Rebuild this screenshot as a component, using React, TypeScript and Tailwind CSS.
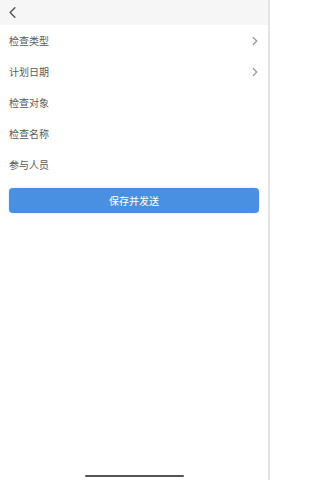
import { ChevronLeft, ChevronRight } from 'lucide-react';

const rows = [
  { label: '检查类型', arrow: true },
  { label: '计划日期', arrow: true },
  { label: '检查对象', arrow: false },
  { label: '检查名称', arrow: false },
  { label: '参与人员', arrow: false },
];

export default function App() {
  return (
    <div
      className="w-[270px] h-[480px] bg-white flex flex-col relative border-r-2 border-[#e4e4e4] overflow-hidden"
      style={{ fontFamily: '"Noto Sans CJK SC", "Noto Sans", sans-serif' }}
    >
      {/* Header */}
      <header className="h-[25px] bg-[#f6f6f6] flex items-center pl-[3px]">
        <ChevronLeft className="w-[19px] h-[19px] text-[#555]" strokeWidth={1.8} />
      </header>

      {/* Form rows */}
      <div className="flex flex-col">
        {rows.map((r) => (
          <div key={r.label} className="h-[31px] flex items-center justify-between pl-[9px] pr-[6px]">
            <span className="text-[10px] text-[#5a5a5a] leading-none">{r.label}</span>
            {r.arrow && <ChevronRight className="w-[14px] h-[14px] text-[#9a9a9a]" strokeWidth={2.2} />}
          </div>
        ))}
      </div>

      {/* Submit */}
      <div className="px-[9px] mt-[8px]">
        <button className="w-full h-[25px] rounded-[4px] bg-[#4a90e2] text-white text-[10px] flex items-center justify-center shadow-[0_0_2px_rgba(74,144,226,0.4)]">
          保存并发送
        </button>
      </div>

      {/* Home indicator */}
      <div className="mt-auto mb-[3px] flex justify-center">
        <div className="w-[99px] h-[2px] rounded-full bg-[#555]" />
      </div>
    </div>
  );
}
